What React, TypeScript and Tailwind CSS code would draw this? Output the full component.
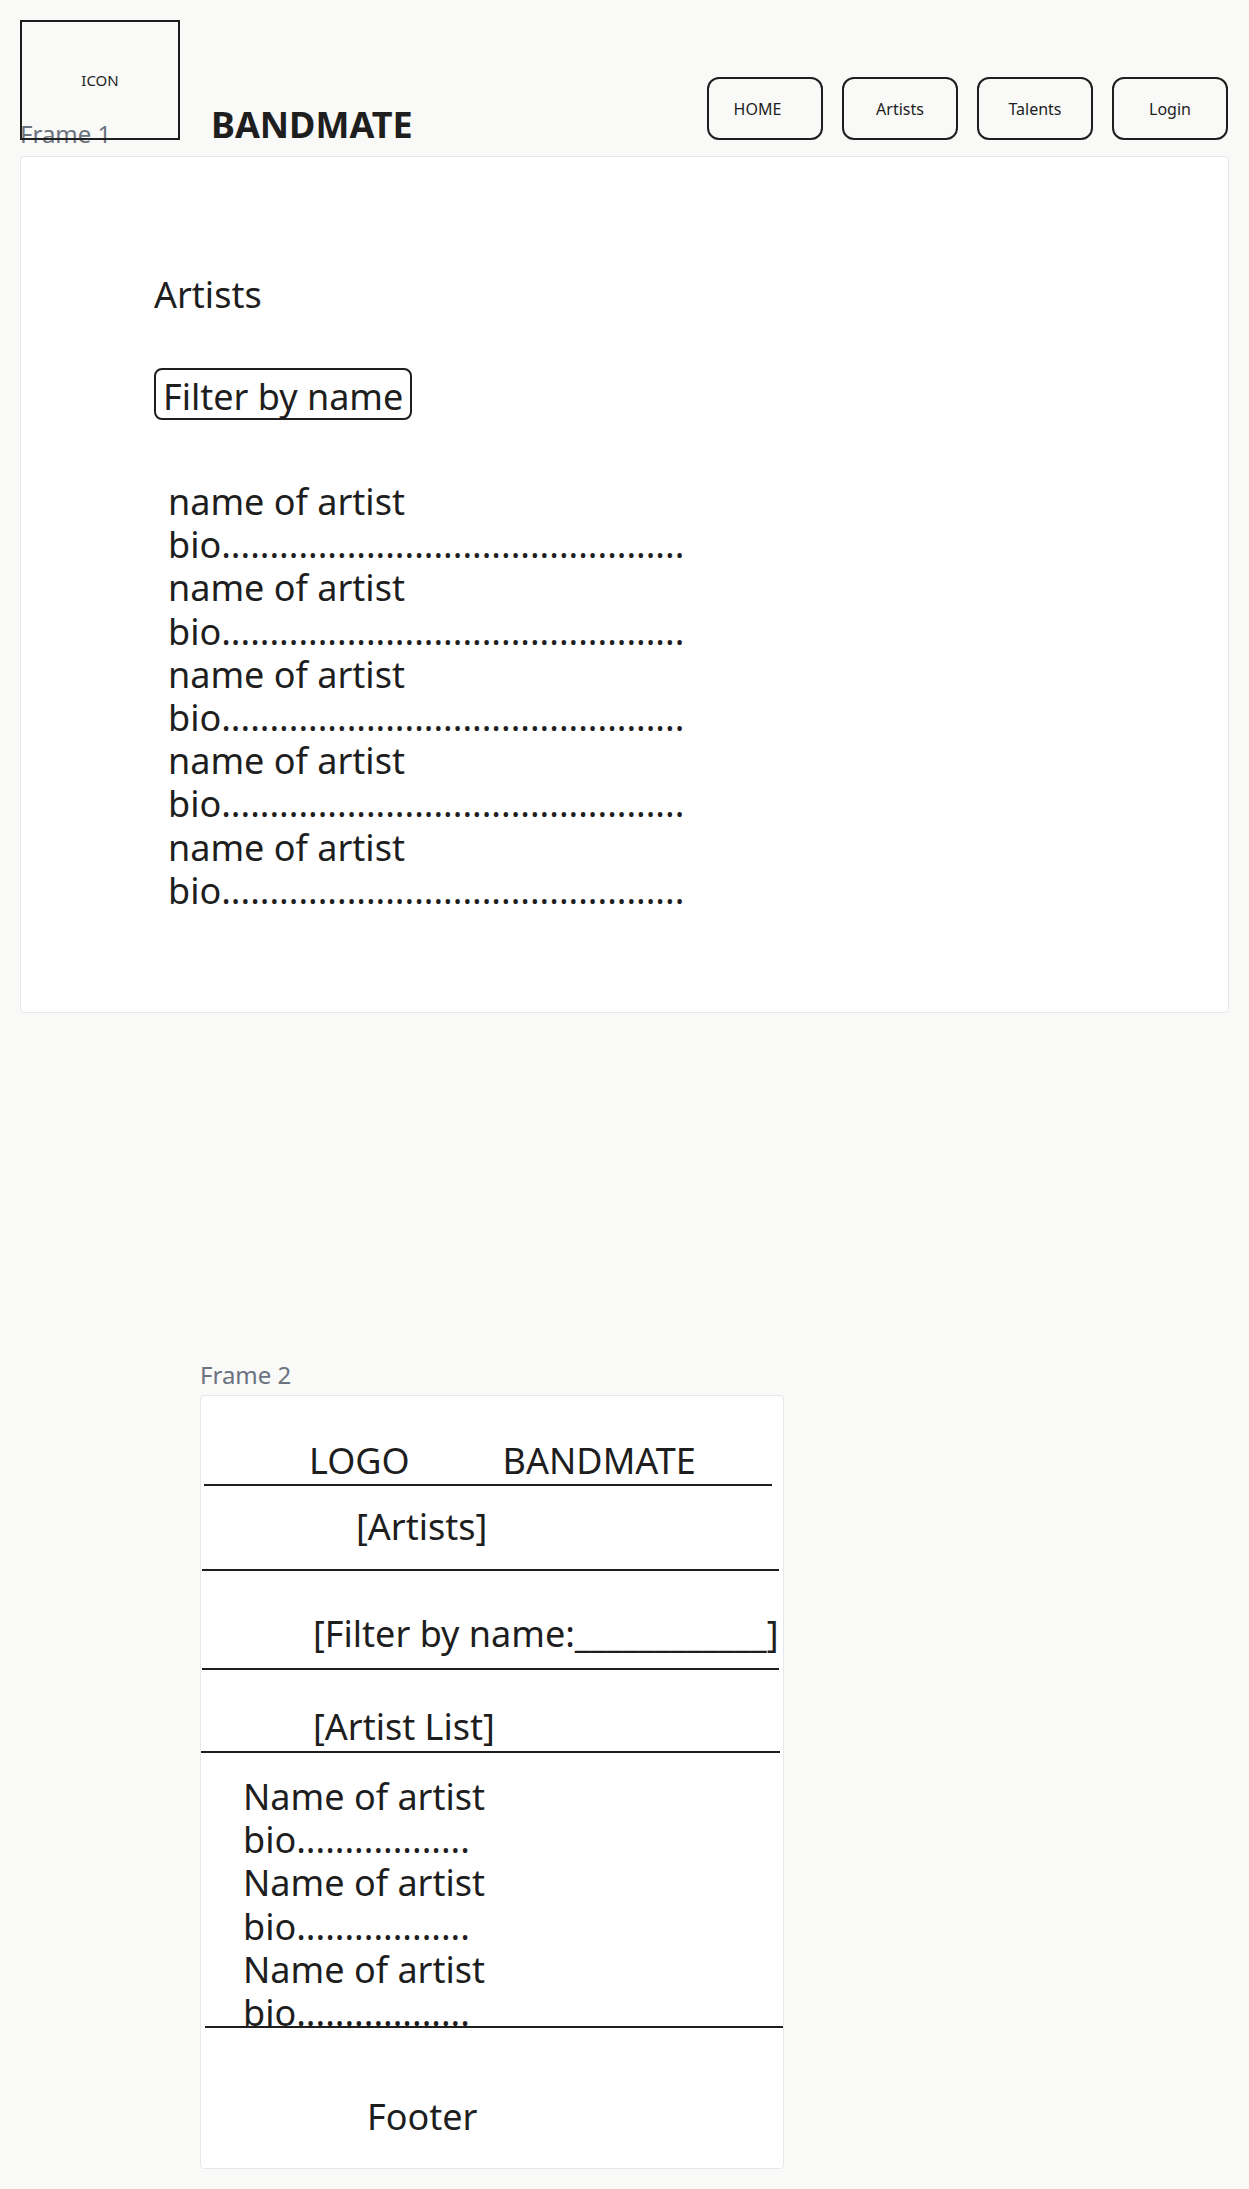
const navItems = ["HOME", "Artists", "Talents", "Login"];

const longBio = "bio" + ".".repeat(48);
const shortBio = "bio" + ".".repeat(18);

function Rule({ className }: { className: string }) {
  return <div className={`h-[2px] bg-[#1e1e1e] ${className}`} />;
}

export default function App() {
  return (
    <div className="min-h-[2189px] bg-[#f9f9f7] px-5 pb-[22px] font-['Noto_Sans',sans-serif] text-[#1e1e1e]">
      {/* top bar */}
      <header className="relative z-10 flex h-[140px] items-end pt-5">
        <div className="flex h-[120px] w-[160px] items-center justify-center border-2 border-[#1e1e1e] text-[15px]">
          ICON
        </div>
        <h1 className="-mb-[3px] ml-[31px] text-[36px] font-bold leading-none">BANDMATE</h1>
        <nav className="ml-auto mr-px flex gap-[19px]">
          {navItems.map((item) => (
            <button
              key={item}
              className={`flex h-[63px] w-[116px] items-center justify-center rounded-[12px] border-2 border-[#1e1e1e] text-[16px] ${
                item === "HOME" ? "pr-[15px]" : ""
              }`}
            >
              {item}
            </button>
          ))}
        </nav>
      </header>

      {/* Frame 1 */}
      <p className="-mt-[22px] text-[24px] leading-[32px] text-[#6b7280]">Frame 1</p>
      <section className="mt-[6px] h-[857px] rounded-[4px] border border-[#e5e7eb] bg-white pl-[133px] pt-[116px] text-[36px] leading-[43px]">
        <h2>Artists</h2>
        <div className="mt-[52px] flex">
          <div className="rounded-[8px] border-2 border-[#1e1e1e] px-[7px] pt-[5px]">Filter by name</div>
        </div>
        <ul className="ml-[14px] mt-[60px] leading-[43.2px]">
          {[0, 1, 2, 3, 4].map((i) => (
            <li key={i}>
              <p>name of artist</p>
              <p>{longBio}</p>
            </li>
          ))}
        </ul>
      </section>

      {/* Frame 2 */}
      <p className="ml-[180px] mt-[346px] text-[24px] leading-[32px] text-[#6b7280]">Frame 2</p>
      <section className="ml-[180px] mt-[4px] h-[774px] w-[584px] rounded-[4px] border border-[#e5e7eb] bg-white text-[36px] leading-[43px]">
        <div className="flex pl-[108px] pt-[43px]">
          <span>LOGO</span>
          <span className="ml-[93px]">BANDMATE</span>
        </div>
        <Rule className="ml-[3px] mr-[11px] mt-[2px]" />
        <p className="mt-[19px] pl-[155px]">[Artists]</p>
        <Rule className="ml-[1px] mr-[4px] mt-[21px]" />
        <p className="mt-[41px] pl-[112px]">[Filter by name:____________]</p>
        <Rule className="ml-[1px] mr-[4px] mt-[13px]" />
        <p className="mt-[35px] pl-[112px]">[Artist List]</p>
        <Rule className="mr-[3px] mt-[3px]" />
        <ul className="mt-[22px] pl-[42px] leading-[43.2px]">
          {[0, 1, 2].map((i) => (
            <li key={i}>
              <p>Name of artist</p>
              <p>{shortBio}</p>
            </li>
          ))}
        </ul>
        <Rule className="relative ml-[4px] -mt-[8px]" />
        <p className="mt-[67px] pl-[166px]">Footer</p>
      </section>
    </div>
  );
}
